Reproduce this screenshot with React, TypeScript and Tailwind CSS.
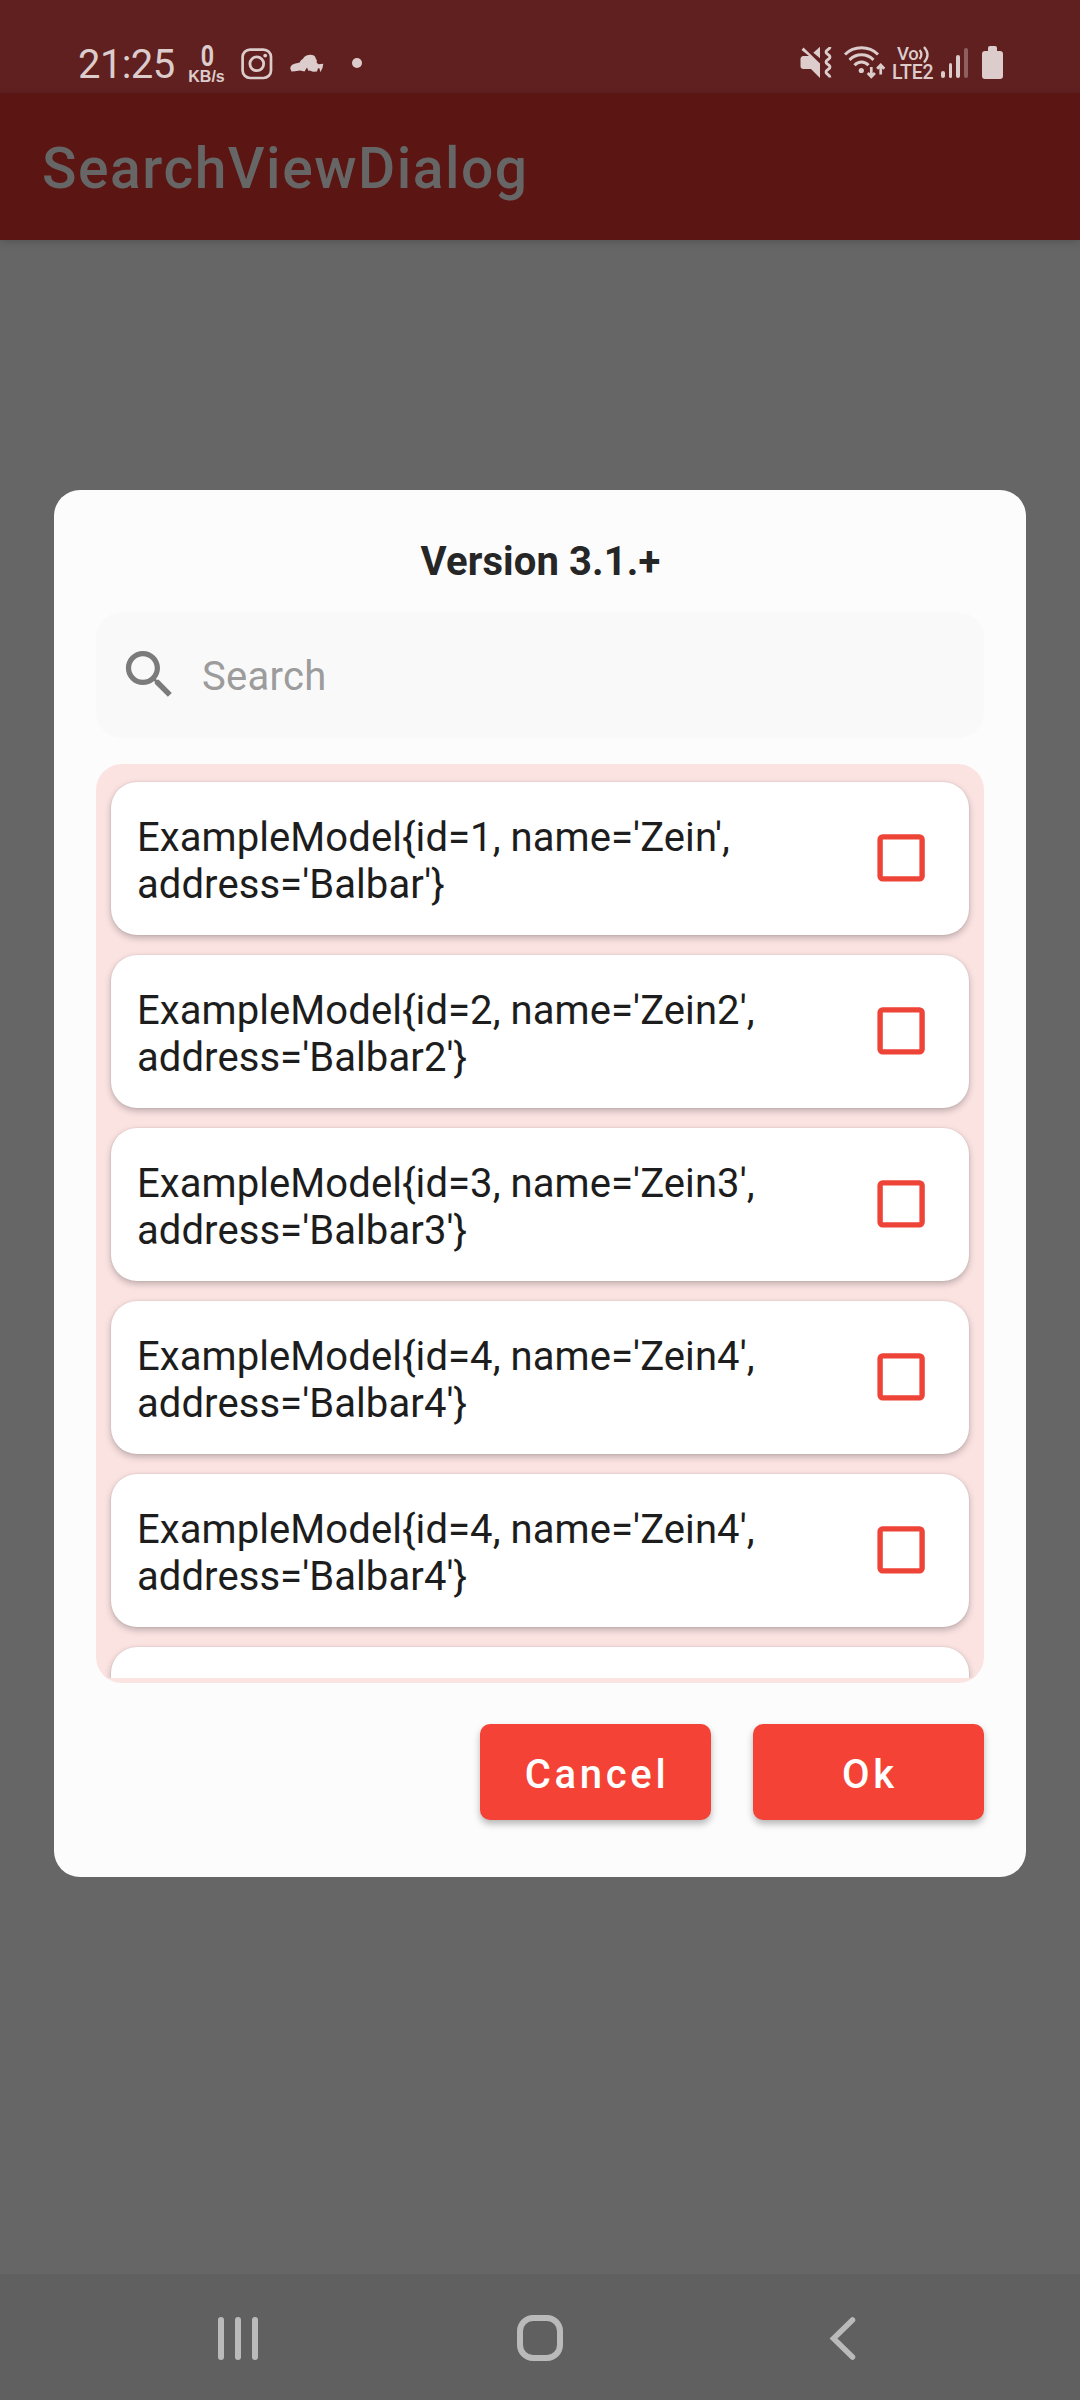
import React from "react";

const items = [
  ["ExampleModel{id=1, name='Zein',", "address='Balbar'}"],
  ["ExampleModel{id=2, name='Zein2',", "address='Balbar2'}"],
  ["ExampleModel{id=3, name='Zein3',", "address='Balbar3'}"],
  ["ExampleModel{id=4, name='Zein4',", "address='Balbar4'}"],
  ["ExampleModel{id=4, name='Zein4',", "address='Balbar4'}"],
];

function StatusBar() {
  return (
    <div className="flex h-[93px] items-start bg-[#602020] pl-[78px] text-[#dccccc]">
      <span className="mt-[42px] w-[110px] whitespace-nowrap text-[40px] leading-[46px] tracking-[-0.6px]">21:25</span>
      <div className="mt-[44px] flex w-[37px] flex-col items-center">
        <span className="ml-[1px] h-[25px] origin-center scale-x-[0.8] text-[29px] font-bold leading-[25px]">0</span>
        <span className="h-[14px] whitespace-nowrap font-['Liberation_Sans'] text-[16px] font-bold leading-[15px]">KB/s</span>
      </div>
      <svg className="ml-[16px] mt-[48px] h-[32px] w-[32px]" viewBox="0 0 32 32" fill="none" stroke="currentColor">
        <rect x="1.6" y="1.6" width="28.4" height="28.4" rx="7.5" strokeWidth="2.7" />
        <circle cx="15.8" cy="15.8" r="6.9" strokeWidth="2.8" />
        <circle cx="24.2" cy="7.6" r="1.9" fill="currentColor" stroke="none" />
      </svg>
      <svg className="ml-[17px] mt-[54px] h-[20px] w-[34px]" viewBox="0 0 34 20" fill="currentColor">
        <path d="M.3 14.800C0 12 2 10.500 4.500 9.800L9.700 8.500C10.500 6.500 11.500 5.500 13 4.700C14 3 15.500 1.800 17.300 1.300C19 .6 20.500 .6 21.700 1C24 1 25.500 2.500 25.700 4.500C26.800 5.500 27 7 26.700 8.700L28.500 10.200L33.300 9.800L32.500 14L30.300 18.300L29.500 14.500L28 14.200L27 17.500L23 17.800L19.700 16.500L18.500 17L17 13.500L14.500 17.500L10 16.500L5 17.300L1.500 17.500Z" />
      </svg>
      <span className="ml-[28px] mt-[58px] h-[10px] w-[10px] rounded-full bg-[#dccccc]" />

      <svg className="ml-[438px] mt-[46px] h-[34px] w-[32px]" viewBox="0 0 32 34" fill="currentColor">
        <path d="M3.500 1.500L20 17.500V32L11 23H3.500C1.500 23 .5 22 .5 20V13C.5 11.500 1.500 10 3.500 10H9L1.500 4Z" />
        <path d="M13.300 6.800L20 .7V12.300Z" />
        <path d="M30 1C30 3.500 26 3.500 26 6C26 8.500 30 8.500 30 11C30 13.500 26 13.500 26 16C26 18.500 30 18.500 30 21C30 23.500 26 23.500 26 26C26 28.500 30 28.500 30 31.500" fill="none" stroke="currentColor" strokeWidth="2.900" />
      </svg>
      <svg className="ml-[11px] mt-[46px] h-[33px] w-[43px]" viewBox="0 0 43 33" fill="none" stroke="currentColor" strokeWidth="3">
        <path d="M2 8.500C11 -.4 26 -.4 35 8.500" />
        <path d="M6.500 13.800C13.500 7.200 23.500 7.200 30.500 13.800" />
        <path d="M11.500 19.200C15.500 15 21.500 15 25.500 19.200" />
        <circle cx="18.300" cy="24.500" r="2.600" fill="currentColor" stroke="none" />
        <path d="M28.300 21V30.500M24.700 27L28.300 30.800L31.900 27M37.700 28.500V19.500M34.100 22.700L37.700 19L41.300 22.700" strokeWidth="2.700" />
      </svg>
      <div className="ml-[6px] mt-[45px] flex w-[43px] flex-col">
        <div className="flex h-[18px] items-start pl-[5px]">
          <span className="text-[18.5px] font-medium leading-[18px] tracking-[-0.3px]">Vo</span>
          <svg className="mt-[1px] h-[18px] w-[11px]" viewBox="0 0 11 18" fill="none" stroke="currentColor" strokeWidth="2.300">
            <path d="M1.500 4C4 6.500 4 10.500 1.500 13M6 1C10.500 6 10.500 11.500 6 16.500" />
          </svg>
        </div>
        <span className="h-[18px] whitespace-nowrap text-[19.5px] font-medium leading-[19px] tracking-[-0.2px]">LTE2</span>
      </div>
      <div className="ml-[6px] mt-[48px] flex h-[30px] items-end gap-[4px]">
        <span className="h-[7px] w-[3.7px] rounded-[2px] bg-[#dccccc]" />
        <span className="h-[15px] w-[3.7px] rounded-[2px] bg-[#dccccc]" />
        <span className="h-[23px] w-[3.7px] rounded-[2px] bg-[#dccccc]" />
        <span className="h-[30px] w-[3.7px] rounded-[2px] bg-[#8d5f5f]" />
      </div>
      <div className="ml-[14px] mt-[46px] flex w-[21px] flex-col items-center">
        <span className="h-[5px] w-[9px] rounded-t-[2px] bg-[#dccccc]" />
        <span className="h-[28px] w-[21px] rounded-[3px] bg-[#dccccc]" />
      </div>
    </div>
  );
}

function Card({ lines }: { lines: string[] }) {
  return (
    <div className="flex h-[153px] shrink-0 items-start justify-between rounded-[26px] bg-white pl-[26px] pr-[44px] shadow-[0_3px_7px_rgba(0,0,0,0.24),0_0_2px_rgba(0,0,0,0.12)]">
      <div className="mt-[32px] whitespace-nowrap text-[40px] leading-[47px] tracking-[0.08px] text-[#1d1d1d]">
        <div>{lines[0]}</div>
        <div>{lines[1]}</div>
      </div>
      <svg className="mt-[52px] h-[48px] w-[48px]" viewBox="0 0 48 48" fill="none" stroke="#ee4337" strokeWidth="5.400">
        <rect x="3.100" y="2.900" width="42" height="42" rx="2.600" />
      </svg>
    </div>
  );
}

export default function App() {
  return (
    <div className="flex h-[2400px] w-[1080px] flex-col overflow-hidden bg-[#666666] font-['Roboto',sans-serif]">
      <StatusBar />
      <div className="flex h-[147px] items-start bg-[#5b1512] pl-[42px] shadow-[0_2px_8px_rgba(0,0,0,0.18)]">
        <h1 className="mt-[43px] whitespace-nowrap text-[57px] font-medium leading-[66px] tracking-[1.5px] text-[#666666]">SearchViewDialog</h1>
      </div>

      <div className="mx-[54px] mt-[250px] flex h-[1387px] flex-col rounded-[26px] bg-[#fcfcfc] px-[42px]">
        <h2 className="mt-[49px] h-[73px] pl-[1px] text-center text-[40px] font-bold leading-[46px] tracking-[0.1px] text-[#262626]">Version 3.1.+</h2>
        <div className="flex h-[126px] items-start rounded-[26px] bg-[#f9f9f9]">
          <svg className="ml-[22px] mt-[31px] h-[63px] w-[63px]" viewBox="0 0 24 24" fill="#7b7b7b">
            <path d="M15.500 14h-.79l-.28-.27C15.410 12.590 16 11.110 16 9.500 16 5.910 13.090 3 9.500 3S3 5.910 3 9.500 5.910 16 9.500 16c1.610 0 3.090-.59 4.230-1.570l.27.28v.79l5 4.990L20.490 19l-4.990-5zm-6 0C7.010 14 5 11.990 5 9.500S7.010 5 9.500 5 14 7.010 14 9.500 11.990 14 9.500 14z" />
          </svg>
          <span className="ml-[21px] mt-[42px] text-[40px] leading-[46px] tracking-[0.3px] text-[#9c9c9c]">Search</span>
        </div>
        <div className="mt-[26px] h-[919px] overflow-hidden rounded-[26px] bg-[#fbe3e2] pb-[5px]">
          <div className="flex h-[914px] flex-col gap-[20px] overflow-hidden px-[15px] pt-[18px]">
            {items.map((lines, i) => (
              <Card key={i} lines={lines} />
            ))}
            {/* top edge of the next row, scrolled below the list's end */}
            <div className="h-[153px] shrink-0 rounded-[26px] bg-white shadow-[0_3px_7px_rgba(0,0,0,0.24),0_0_2px_rgba(0,0,0,0.12)]" />
          </div>
        </div>
        <div className="mt-[41px] flex justify-end gap-[42px]">
          {["Cancel", "Ok"].map((label) => (
            <button
              key={label}
              className="flex h-[96px] w-[231px] items-start justify-center rounded-[10px] bg-[#f44336] pl-[3px] pt-[28px] text-[40px] font-medium leading-[46px] tracking-[3.7px] text-white shadow-[0_4px_7px_rgba(0,0,0,0.28)]"
            >
              {label}
            </button>
          ))}
        </div>
      </div>

      <div className="mt-auto flex h-[126px] items-start bg-[#606060]">
        <div className="ml-[218px] mt-[43px] flex gap-[11px]">
          <span className="h-[43px] w-[6px] rounded-full bg-[#bababa]" />
          <span className="h-[43px] w-[6px] rounded-full bg-[#bababa]" />
          <span className="h-[43px] w-[6px] rounded-full bg-[#bababa]" />
        </div>
        <span className="ml-[259px] mt-[41px] h-[46px] w-[46px] rounded-[16px] border-[6px] border-[#bababa]" />
        <svg className="ml-[266px] mt-[42px] h-[45px] w-[28px]" viewBox="0 0 28 45" fill="none" stroke="#bababa" strokeWidth="5.500" strokeLinecap="round">
          <path d="M23.500 4L4.500 22.500L23.500 41" />
        </svg>
      </div>
    </div>
  );
}
